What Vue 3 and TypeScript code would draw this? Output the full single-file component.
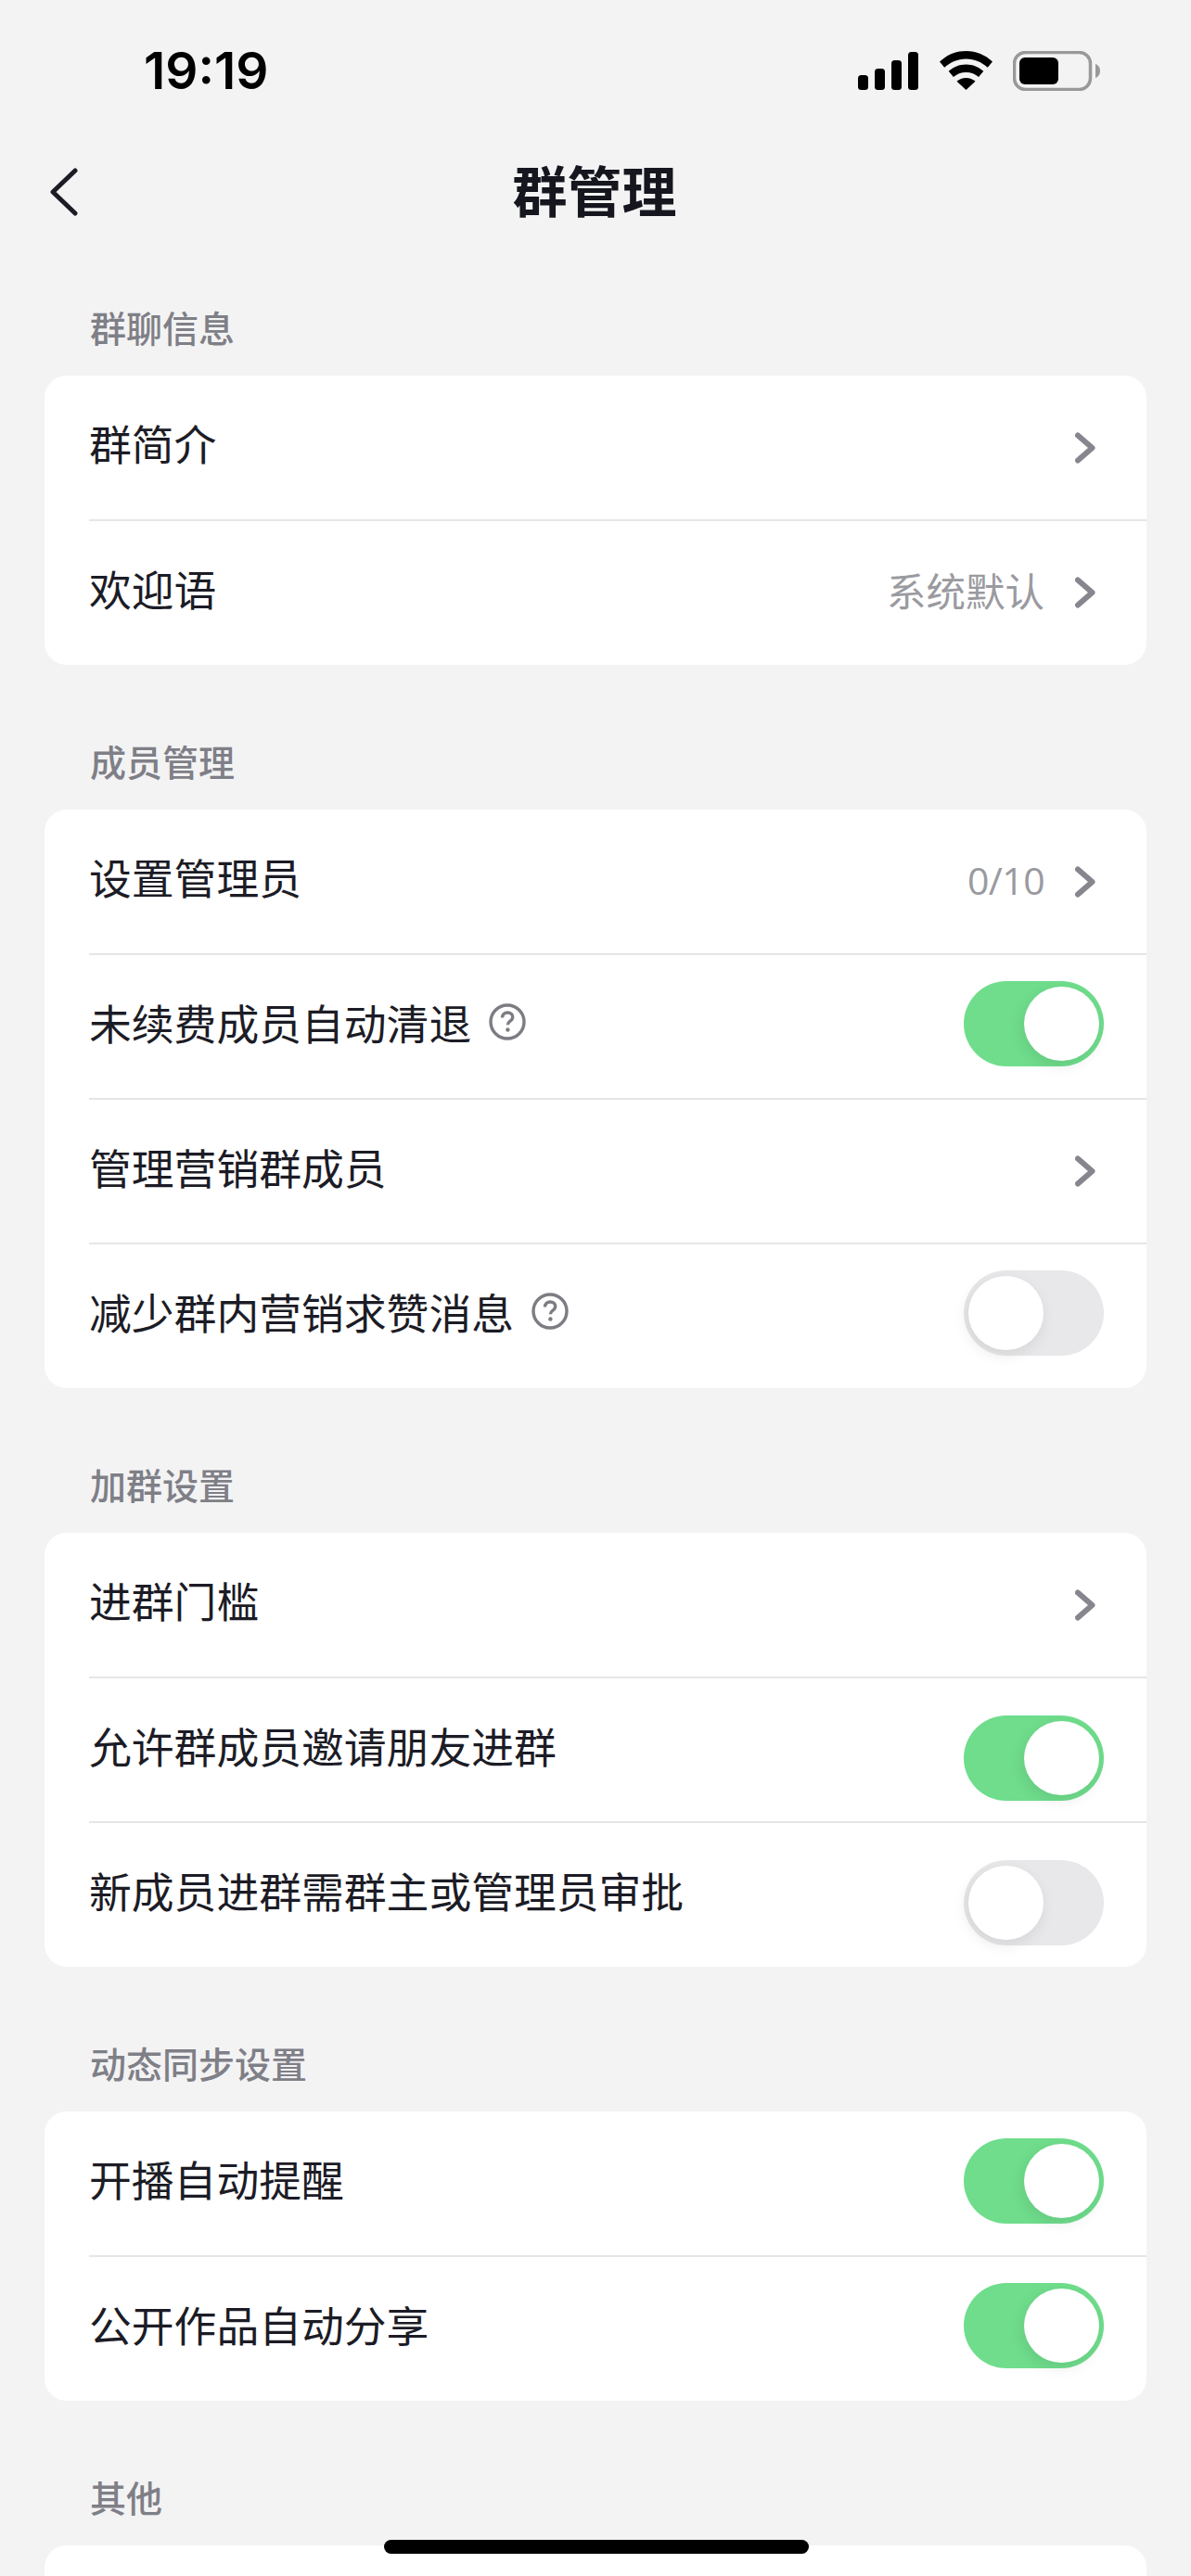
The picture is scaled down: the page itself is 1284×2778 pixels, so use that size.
<template>
  <div class="page">
    <div class="status-bar">
      <span class="time">19:19</span>
      <div class="status-icons">
        <svg class="signal" width="65" height="41" viewBox="0 0 65 41">
          <rect x="0" y="25" width="11" height="16" rx="3.5" />
          <rect x="18" y="18" width="11" height="23" rx="3.5" />
          <rect x="36" y="9" width="11" height="32" rx="3.5" />
          <rect x="54" y="0" width="11" height="41" rx="3.5" />
        </svg>
        <svg class="wifi" width="57" height="42" viewBox="0 0 57 42">
          <path d="M28.5 0C17.5 0 7.8 4.2 0 11.5l5.2 6.3C11.6 12 19.6 8.5 28.5 8.5s16.900 3.500 23.300 9.300l5.200-6.300C49.200 4.200 39.500 0 28.500 0z" />
          <path d="M28.500 14.500c-7.300 0-13.700 2.800-18.800 7.200l5.200 6.300c3.600-3.100 8.300-5 13.600-5s10 1.900 13.600 5l5.200-6.300c-5.100-4.400-11.500-7.200-18.800-7.200z" />
          <path d="M28.500 29c-3.900 0-7.300 1.400-10 3.700L28.500 42l10-9.300c-2.700-2.300-6.100-3.700-10-3.700z" />
        </svg>
        <svg class="battery" width="94" height="43" viewBox="0 0 94 43">
          <rect x="1.500" y="1.500" width="82" height="40" rx="12" fill="none" stroke="#999999" stroke-width="3.500" />
          <rect x="7" y="7" width="42" height="29" rx="6" fill="#000000" />
          <path d="M89 14c3 1 5 4 5 7.500s-2 6.500-5 7.500z" fill="#999999" />
        </svg>
      </div>
    </div>

    <div class="nav-bar">
      <svg class="back" width="31" height="52" viewBox="0 0 31 52">
        <path d="M28 3 4 26l24 23" fill="none" stroke="#1c1c26" stroke-width="5" stroke-linecap="round" stroke-linejoin="round" />
      </svg>
      <h1 class="nav-title">群管理</h1>
    </div>

    <section v-for="section in sections" :key="section.title" class="section" :class="{ 'low-toggles': section.lowToggles }">
      <h2 class="section-title">{{ section.title }}</h2>
      <div class="card">
        <div v-for="row in section.rows" :key="row.label" class="row">
          <span class="row-label">{{ row.label }}</span>
          <svg v-if="row.help" class="help" width="40" height="40" viewBox="0 0 40 40">
            <circle cx="20" cy="20" r="18" fill="none" stroke="#7c7c83" stroke-width="3.4" />
            <path d="M14.500 15.500c0-3.300 2.400-5.500 5.700-5.500 3.200 0 5.500 2 5.500 4.800 0 2.200-1.200 3.400-3 4.600-1.600 1.100-2.300 2-2.300 3.900" fill="none" stroke="#7c7c83" stroke-width="3.4" />
            <circle cx="20.400" cy="28.500" r="2.200" fill="#7c7c83" />
          </svg>
          <span class="spacer"></span>
          <span v-if="row.value" class="row-value" :class="{ numeric: isNumeric(row.value) }">{{ row.value }}</span>
          <div v-if="row.toggle !== undefined" class="toggle" :class="{ on: row.toggle }">
            <span class="knob"></span>
          </div>
          <svg v-else-if="row.label" class="chevron" width="22" height="34" viewBox="0 0 22 34">
            <path d="M3 3.500 18.500 17 3 30.500" fill="none" stroke="#86868e" stroke-width="6" stroke-linecap="round" stroke-linejoin="round" />
          </svg>
        </div>
      </div>
    </section>

    <div class="home-bar"></div>
  </div>
</template>

<script setup lang="ts">
interface Row {
  label: string
  value?: string
  help?: boolean
  toggle?: boolean
}

interface Section {
  title: string
  lowToggles?: boolean
  rows: Row[]
}

const sections: Section[] = [
  {
    title: '群聊信息',
    rows: [{ label: '群简介' }, { label: '欢迎语', value: '系统默认' }]
  },
  {
    title: '成员管理',
    rows: [
      { label: '设置管理员', value: '0/10' },
      { label: '未续费成员自动清退', help: true, toggle: true },
      { label: '管理营销群成员' },
      { label: '减少群内营销求赞消息', help: true, toggle: false }
    ]
  },
  {
    title: '加群设置',
    lowToggles: true,
    rows: [
      { label: '进群门槛' },
      { label: '允许群成员邀请朋友进群', toggle: true },
      { label: '新成员进群需群主或管理员审批', toggle: false }
    ]
  },
  {
    title: '动态同步设置',
    rows: [
      { label: '开播自动提醒', toggle: true },
      { label: '公开作品自动分享', toggle: true }
    ]
  },
  {
    title: '其他',
    rows: [{ label: '' }]
  }
]

const isNumeric = (value: string) => /^[\d/]+$/.test(value)
</script>

<style>
html,
body {
  margin: 0;
  background: #f3f3f4;
}
</style>

<style scoped>
.page {
  position: relative;
  width: 1284px;
  height: 2778px;
  overflow: hidden;
  background: #f3f3f4;
  font-family: "Noto Sans CJK SC", "Noto Sans", sans-serif;
}

.status-bar {
  display: flex;
  justify-content: space-between;
  align-items: center;
  height: 152px;
  padding: 0 98px 0 155px;
  box-sizing: border-box;
}

.time {
  font-family: Inter, sans-serif;
  font-size: 55px;
  font-weight: 600;
  line-height: 1;
  color: #000;
}

.status-icons {
  display: flex;
  align-items: flex-end;
}

.signal {
  fill: #000;
  margin-right: 23px;
  margin-bottom: 1px;
}

.wifi {
  fill: #000;
  margin-right: 22px;
  margin-bottom: 1px;
}

.nav-bar {
  position: relative;
  display: flex;
  justify-content: center;
  align-items: center;
  height: 110px;
  margin-bottom: -13px;
}

.back {
  position: absolute;
  left: 53px;
  top: 29px;
}

.nav-title {
  margin: 0 2px 0 0;
  font-size: 59px;
  font-weight: 700;
  line-height: 80px;
  color: #16161f;
  transform: translateY(-3px);
}

.section {
  padding: 0 48px;
}

.section-title {
  margin: 0;
  padding: 73px 0 23px 49px;
  font-size: 39px;
  font-weight: 500;
  line-height: 60px;
  color: #7f7f87;
}

.card {
  background: #fff;
  border-radius: 24px;
  overflow: hidden;
  padding-bottom: 1px;
}

.row {
  display: flex;
  align-items: center;
  height: 156px;
  box-sizing: border-box;
  margin-left: 48px;
  padding-right: 46px;
  border-top: 2px solid #e6e6e8;
}

.row:first-child {
  height: 155px;
  border-top: none;
}

.row-label {
  font-size: 45.8px;
  line-height: 60px;
  color: #1c1c26;
  padding-bottom: 11px;
}

.help {
  margin-left: 19px;
  margin-bottom: 11px;
}

.spacer {
  flex: 1;
}

.row-value {
  margin-right: 33px;
  font-family: "Noto Sans CJK SC", sans-serif;
  font-size: 42.5px;
  color: #9a9aa0;
  padding-bottom: 8px;
}

.row-value.numeric {
  margin-right: 33px;
  font-family: "Open Sans", sans-serif;
  font-size: 41px;
  letter-spacing: -0.6px;
  padding-bottom: 4px;
}

.chevron {
  margin-right: 9px;
}

.toggle {
  position: relative;
  width: 151px;
  height: 92px;
  border-radius: 46px;
  background: #e8e8ea;
  margin-bottom: 6px;
}

.low-toggles .toggle {
  margin-top: 18px;
  margin-bottom: 0;
}

.toggle.on {
  background: #6fdd8c;
}

.knob {
  position: absolute;
  top: 6px;
  left: 5px;
  width: 81px;
  height: 80px;
  border-radius: 50%;
  background: #fff;
  box-shadow: -2px 5px 16px rgba(0, 0, 0, 0.09);
}

.toggle.on .knob {
  left: 65px;
}

.home-bar {
  position: absolute;
  left: 414px;
  top: 2739px;
  width: 458px;
  height: 15px;
  border-radius: 8px;
  background: #000;
}
</style>
